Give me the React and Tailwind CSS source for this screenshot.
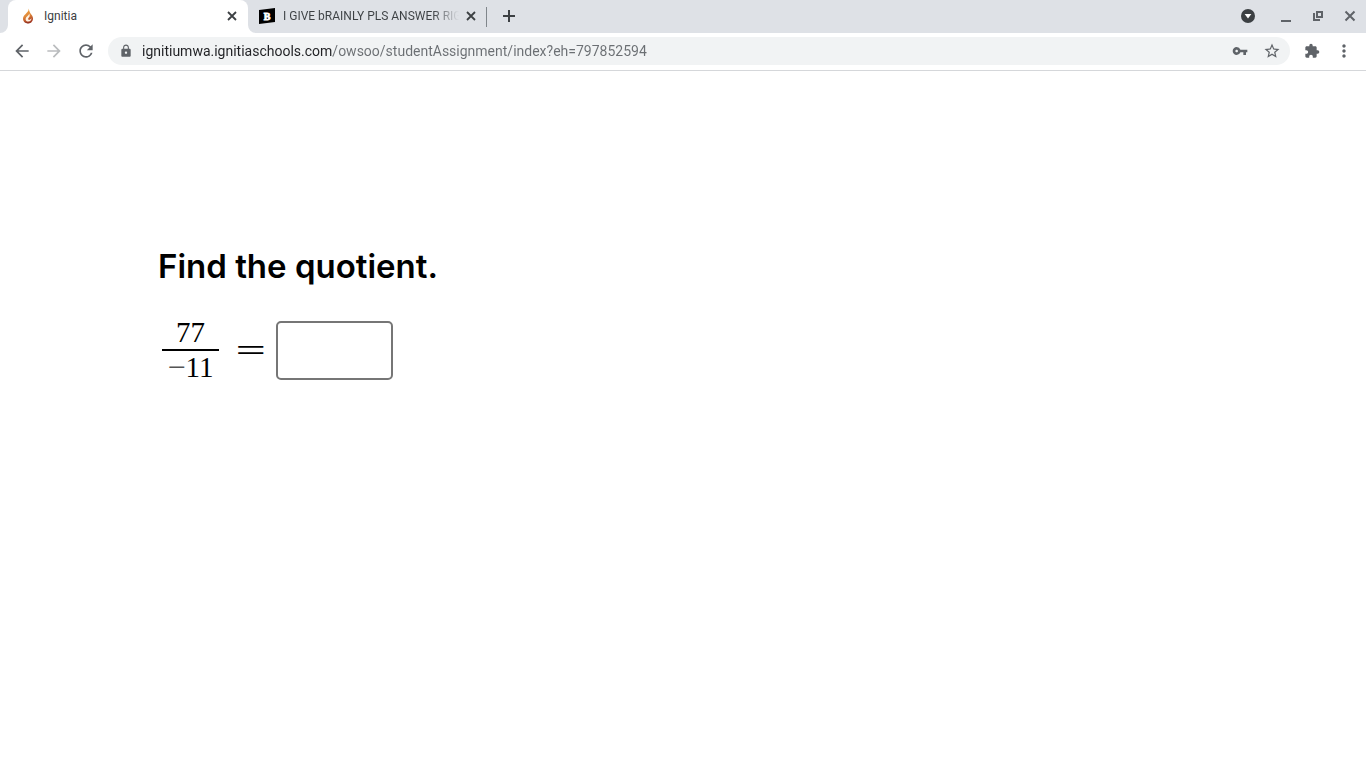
import React, { useState } from "react";
import {
  MdArrowBack,
  MdArrowForward,
  MdExtension,
  MdLock,
  MdMoreVert,
  MdRefresh,
  MdStarBorder,
  MdVpnKey,
} from "react-icons/md";

function FlameIcon() {
  return (
    <svg className="h-4 w-4 shrink-0" viewBox="0 0 16 16" aria-hidden="true">
      <defs>
        <linearGradient id="flame" x1="0" y1="0" x2="0.3" y2="1">
          <stop offset="0" stopColor="#f3a63a" />
          <stop offset="0.55" stopColor="#e08a3c" />
          <stop offset="1" stopColor="#a83a22" />
        </linearGradient>
      </defs>
      <path
        d="M8.6 0.6C9 3 7.2 4.4 5.4 6.3C3.9 7.8 2.8 9.2 3 11.3C3.3 14 5.4 15.4 8 15.4C10.8 15.4 13 13.4 13 10.6C13 8.7 12 7.3 10.9 6C9.6 4.5 9.3 2.8 8.6 0.6Z"
        fill="url(#flame)"
      />
      <path
        d="M9 5.4C9.3 7.4 5.6 8.6 5.6 11.2C5.6 12.9 7 13.7 8.4 13.6C10.4 13.5 11.6 12.1 11.4 10.1C10.8 11.4 9.8 12 8.9 11.8C7.7 11.5 8 10.2 8.8 9.4C9.9 8.4 10.1 6.8 9 5.4Z"
        fill="#fff3e2"
      />
      <path d="M4 13.2C5.6 15.7 9.8 16 11.8 13.7C9.6 14.8 6.4 15 4 13.2Z" fill="#8c3524" />
    </svg>
  );
}

function BrainlyIcon() {
  return (
    <svg className="h-4 w-4 shrink-0" viewBox="0 0 16 16" aria-hidden="true">
      <path d="M0 2L16 0V14L0 16Z" fill="#000" />
      <text
        x="8"
        y="11.5"
        textAnchor="middle"
        fill="#fff"
        stroke="#fff"
        strokeWidth="0.8"
        fontFamily="Liberation Serif, serif"
        fontWeight="bold"
        fontSize="10"
      >
        B
      </text>
    </svg>
  );
}

function CrossIcon() {
  return (
    <svg className="h-4 w-4" viewBox="0 0 16 16" fill="none" stroke="currentColor" aria-hidden="true">
      <path d="M4 4L12 12M12 4L4 12" strokeWidth="1.8" />
    </svg>
  );
}

// Concave corner joining the active tab to the toolbar
function TabFlare({ className }) {
  return (
    <svg className={`h-2 w-2 ${className}`} viewBox="0 0 8 8" aria-hidden="true">
      <path d="M8 0V8H0A8 8 0 0 0 8 0Z" fill="#fff" />
    </svg>
  );
}

function TabStrip() {
  return (
    <div className="flex h-[33px] items-stretch bg-[#dee1e6] text-[#3c4043]">
      <TabFlare className="self-end" />
      <div className="flex w-60 items-center rounded-t-lg bg-white pb-0.5 pl-3 pr-2">
        <FlameIcon />
        <span className="ml-2 flex-1 text-xs">Ignitia</span>
        <button type="button" aria-label="Close Ignitia">
          <CrossIcon />
        </button>
      </div>
      <TabFlare className="-scale-x-100 self-end" />

      <div className="flex w-[230px] items-center pb-0.5 pl-[3px] pr-[7px]">
        <BrainlyIcon />
        <span className="ml-2 flex-1 overflow-hidden whitespace-nowrap bg-linear-to-r from-[#3c4043] from-85% to-transparent bg-clip-text text-xs text-transparent">
          I GIVE bRAINLY PLS ANSWER RIGHT
        </span>
        <button type="button" aria-label="Close Brainly" className="ml-1">
          <CrossIcon />
        </button>
      </div>
      <div className="h-5 w-px self-center bg-[#80868b]" />
      <button type="button" aria-label="New tab" className="ml-3 flex w-5 items-center justify-center pb-0.5">
        <svg className="h-4 w-4" viewBox="0 0 16 16" fill="none" stroke="currentColor">
          <path d="M8 2V14M2 8H14" strokeWidth="2" />
        </svg>
      </button>

      <div className="ml-auto flex items-center gap-5 pb-0.5 pr-2 text-[#5f6368]">
        <button type="button" aria-label="Search tabs" className="mr-1">
          <svg className="h-4 w-4" viewBox="0 0 16 16">
            <circle cx="8" cy="8" r="7" fill="#3c4043" />
            <path d="M4.6 6H11.4L8 10.4Z" fill="#fff" />
          </svg>
        </button>
        <button type="button" aria-label="Minimize">
          <svg className="h-3 w-3" viewBox="0 0 12 12">
            <path d="M1 11H11" stroke="currentColor" strokeWidth="2" />
          </svg>
        </button>
        <div className="flex items-center gap-[18px]">
          <button type="button" aria-label="Restore">
            <svg className="h-3 w-3" viewBox="0 0 12 12" fill="none" stroke="currentColor">
              <path d="M5 2H10V7H5Z" strokeWidth="2" />
              <path d="M2 3V10H8" strokeWidth="2" />
            </svg>
          </button>
          <button type="button" aria-label="Close window">
            <svg className="h-4 w-4" viewBox="0 0 16 16" fill="none" stroke="currentColor">
              <path d="M3.5 3.5L12.5 12.5M12.5 3.5L3.5 12.5" strokeWidth="2" />
            </svg>
          </button>
        </div>
      </div>
    </div>
  );
}

function Toolbar() {
  const [url, setUrl] = useState(
    "ignitiumwa.ignitiaschools.com/owsoo/studentAssignment/index?eh=797852594"
  );

  return (
    <div className="flex items-center border-b border-[#d5d7da] bg-white px-3 pb-[5px] pt-1 text-[#5f6368]">
      <button type="button" aria-label="Back">
        <MdArrowBack className="h-5 w-5" />
      </button>
      <button type="button" aria-label="Forward" className="ml-3 text-[#babcbe]">
        <MdArrowForward className="h-5 w-5" />
      </button>
      <button type="button" aria-label="Reload" className="ml-3">
        <MdRefresh className="h-5 w-5" />
      </button>
      <div className="ml-3 flex h-7 flex-1 items-center rounded-full bg-[#f1f3f4] pl-[11px] pr-[9px]">
        <MdLock className="h-3.5 w-3.5" />
        <input
          type="text"
          aria-label="Address"
          value={url}
          onChange={(e) => setUrl(e.target.value)}
          className="ml-[9px] h-6 flex-1 bg-linear-to-r from-[#202124] from-[191px] to-[#6b6f73] to-[191px] bg-clip-text text-sm text-transparent caret-black outline-none"
        />
        <button type="button" aria-label="Saved passwords">
          <MdVpnKey className="h-4 w-4" />
        </button>
        <button type="button" aria-label="Bookmark this tab" className="ml-[15px]">
          <MdStarBorder className="h-[18px] w-[18px]" />
        </button>
      </div>
      <button type="button" aria-label="Extensions" className="ml-3.5">
        <MdExtension className="h-4 w-4" />
      </button>
      <button type="button" aria-label="Menu" className="ml-3.5">
        <MdMoreVert className="h-5 w-5" />
      </button>
    </div>
  );
}

function Question() {
  const [answer, setAnswer] = useState("");

  return (
    <main className="px-[158px] pt-[171px] text-black">
      <h1 className="font-['Inter',sans-serif] text-[33px] font-semibold leading-12">
        Find the quotient.
      </h1>
      <div className="mt-7 flex items-center font-['Liberation_Serif',serif]">
        <div className="ml-1 flex w-[57px] flex-col items-center pb-0.5 text-[29px] leading-7">
          <span className="pb-[3px]">77</span>
          <span className="flex w-full justify-center border-t-2 border-black pt-0.5">
            <span className="text-[32px] text-[#555]">−</span>11
          </span>
        </div>
        <span className="ml-[15px] pb-1 font-['DejaVu_Sans',sans-serif] text-[40px] font-extralight leading-14">
          =
        </span>
        <input
          type="text"
          aria-label="Answer"
          value={answer}
          onChange={(e) => setAnswer(e.target.value)}
          className="ml-2 h-[59px] w-[117px] rounded-[5px] border-2 border-[#767676] bg-white px-2 text-3xl outline-none"
        />
      </div>
    </main>
  );
}

export default function App() {
  return (
    <div className="min-h-screen bg-white font-['Roboto',sans-serif]">
      <TabStrip />
      <Toolbar />
      <Question />
    </div>
  );
}
